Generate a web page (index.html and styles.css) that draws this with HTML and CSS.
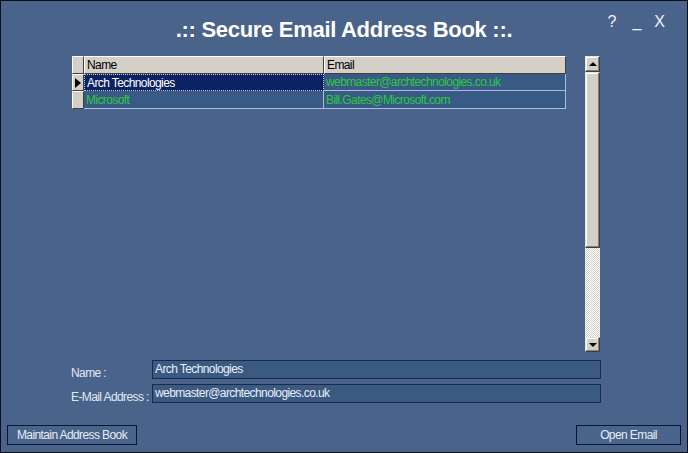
FILE: index.html
```html
<!DOCTYPE html>
<html>
<head>
<meta charset="utf-8">
<link rel="stylesheet" href="styles.css">
</head>
<body>
<div class="window">
  <div class="titlebar">
    <div></div>
    <h1 class="title">.:: Secure Email Address Book ::.</h1>
    <div class="controls"><span class="ctl-help">?</span><span class="ctl-min">_</span><span class="ctl-close">X</span></div>
  </div>
  <div class="main">
    <div class="grid">
      <div class="row head">
        <div class="ind"></div>
        <div class="cell c-name">Name</div>
        <div class="cell c-email">Email</div>
      </div>
      <div class="row">
        <div class="ind"><span class="arrow"></span></div>
        <div class="cell c-name sel">Arch Technologies</div>
        <div class="cell c-email green">webmaster@archtechnologies.co.uk</div>
      </div>
      <div class="row">
        <div class="ind"></div>
        <div class="cell c-name green">Microsoft</div>
        <div class="cell c-email green">Bill.Gates@Microsoft.com</div>
      </div>
    </div>
    <div class="scrollbar">
      <div class="sb-btn"><span class="tri-up"></span></div>
      <div class="sb-thumb"></div>
      <div class="sb-track"></div>
      <div class="sb-btn sb-down"><span class="tri-down"></span></div>
    </div>
  </div>
  <div class="form">
    <div class="field">
      <div class="label">Name :</div>
      <div class="input">Arch Technologies</div>
    </div>
    <div class="field">
      <div class="label">E-Mail Address :</div>
      <div class="input">webmaster@archtechnologies.co.uk</div>
    </div>
  </div>
  <div class="actions">
    <button class="btn btn-maintain">Maintain Address Book</button>
    <button class="btn btn-open">Open Email</button>
  </div>
</div>
</body>
</html>
```
FILE: styles.css
```css
html, body {
  margin: 0;
  padding: 0;
  background: #4a638a;
}
.window {
  width: 688px;
  height: 453px;
  box-sizing: border-box;
  border: 1px solid #0d0f16;
  background: #4a638a;
  display: flex;
  flex-direction: column;
  font-family: "Liberation Sans", Arial, sans-serif;
  font-size: 12px;
  letter-spacing: -0.6px;
  color: #e6ecf5;
}
.titlebar {
  height: 55px;
  flex: none;
  display: grid;
  grid-template-columns: 1fr auto 1fr;
  align-items: start;
}
.title {
  margin: 0;
  padding-top: 16px;
  font: bold 22px/26px "Liberation Sans", Arial, sans-serif;
  letter-spacing: -0.3px;
  color: #ffffff;
  white-space: nowrap;
}
.controls {
  justify-self: end;
  display: flex;
  padding: 12px 22px 0 0;
  font: 16px/18px "Liberation Sans", Arial, sans-serif;
  letter-spacing: 0;
  color: #eef2f8;
}
.ctl-min { margin-left: 16px; }
.ctl-close { margin-left: 13px; }
.main {
  height: 296px;
  flex: none;
  display: flex;
  padding-left: 71px;
  gap: 19px;
}
.grid {
  width: 494px;
  align-self: flex-start;
}
.row {
  display: flex;
  height: 18px;
}
.row:nth-child(2) { height: 17px; }
.ind {
  width: 12px;
  box-sizing: border-box;
  background: #d4d0c8;
  border: 1px solid;
  border-color: #ffffff #404040 #404040 #ffffff;
  display: flex;
  align-items: center;
  padding-left: 2px;
}
.arrow {
  width: 0;
  height: 0;
  border-left: 6px solid #000;
  border-top: 5px solid transparent;
  border-bottom: 5px solid transparent;
}
.cell {
  box-sizing: border-box;
  padding-left: 2px;
  border-right: 1px solid #a9bde0;
  border-bottom: 1px solid #a9bde0;
  background: #3a5a86;
  white-space: nowrap;
  overflow: hidden;
  display: flex;
  align-items: center;
}
.c-name { width: 240px; }
.c-email { width: 242px; }
.head .cell {
  background: #d4d0c8;
  color: #000;
  border: 1px solid;
  border-color: #ffffff #404040 #404040 #ffffff;
}
.cell.sel {
  background: #0b2363;
  color: #ffffff;
  border: 1px dotted #c8d0e0;
}
.green { color: #2cc83e; }
.scrollbar {
  width: 15px;
  height: 296px;
  display: flex;
  flex-direction: column;
}
.sb-btn, .sb-thumb {
  box-sizing: border-box;
  background: #d4d0c8;
  border: 1px solid;
  border-color: #e8e6e0 #404040 #404040 #e8e6e0;
  box-shadow: inset -1px -1px #808080, inset 1px 1px #ffffff;
}
.sb-btn {
  height: 16px;
  display: flex;
  align-items: center;
  justify-content: center;
}
.sb-down { height: 15px; }
.sb-thumb { height: 176px; }
.sb-track {
  height: 89px;
  background: repeating-conic-gradient(#d4d0c8 0 25%, #ffffff 0 50%) 0 0 / 2px 2px;
}
.tri-up {
  width: 0;
  height: 0;
  border-left: 4px solid transparent;
  border-right: 4px solid transparent;
  border-bottom: 4px solid #000;
}
.tri-down {
  width: 0;
  height: 0;
  border-left: 4px solid transparent;
  border-right: 4px solid transparent;
  border-top: 4px solid #000;
}
.form {
  flex: none;
  display: flex;
  flex-direction: column;
  gap: 5px;
  padding: 8px 0 0 70px;
}
.field {
  display: flex;
  height: 19px;
}
.label {
  width: 81px;
  padding-top: 5px;
  line-height: 17px;
  color: #e2e8f2;
  white-space: nowrap;
}
.input {
  width: 449px;
  height: 19px;
  box-sizing: border-box;
  border: 1px solid #1a2a48;
  background: #3b5a82;
  color: #eaf0f8;
  padding-left: 2px;
  line-height: 17px;
  white-space: nowrap;
}
.actions {
  flex: none;
  display: flex;
  justify-content: space-between;
  padding: 22px 6px 0 6px;
}
.btn {
  height: 20px;
  box-sizing: border-box;
  background: transparent;
  border: 1px solid #0b1430;
  color: #e6ecf5;
  font: inherit;
  letter-spacing: -0.6px;
  padding: 0;
  line-height: 18px;
}
.btn-maintain { width: 130px; }
.btn-open { width: 105px; }
```
